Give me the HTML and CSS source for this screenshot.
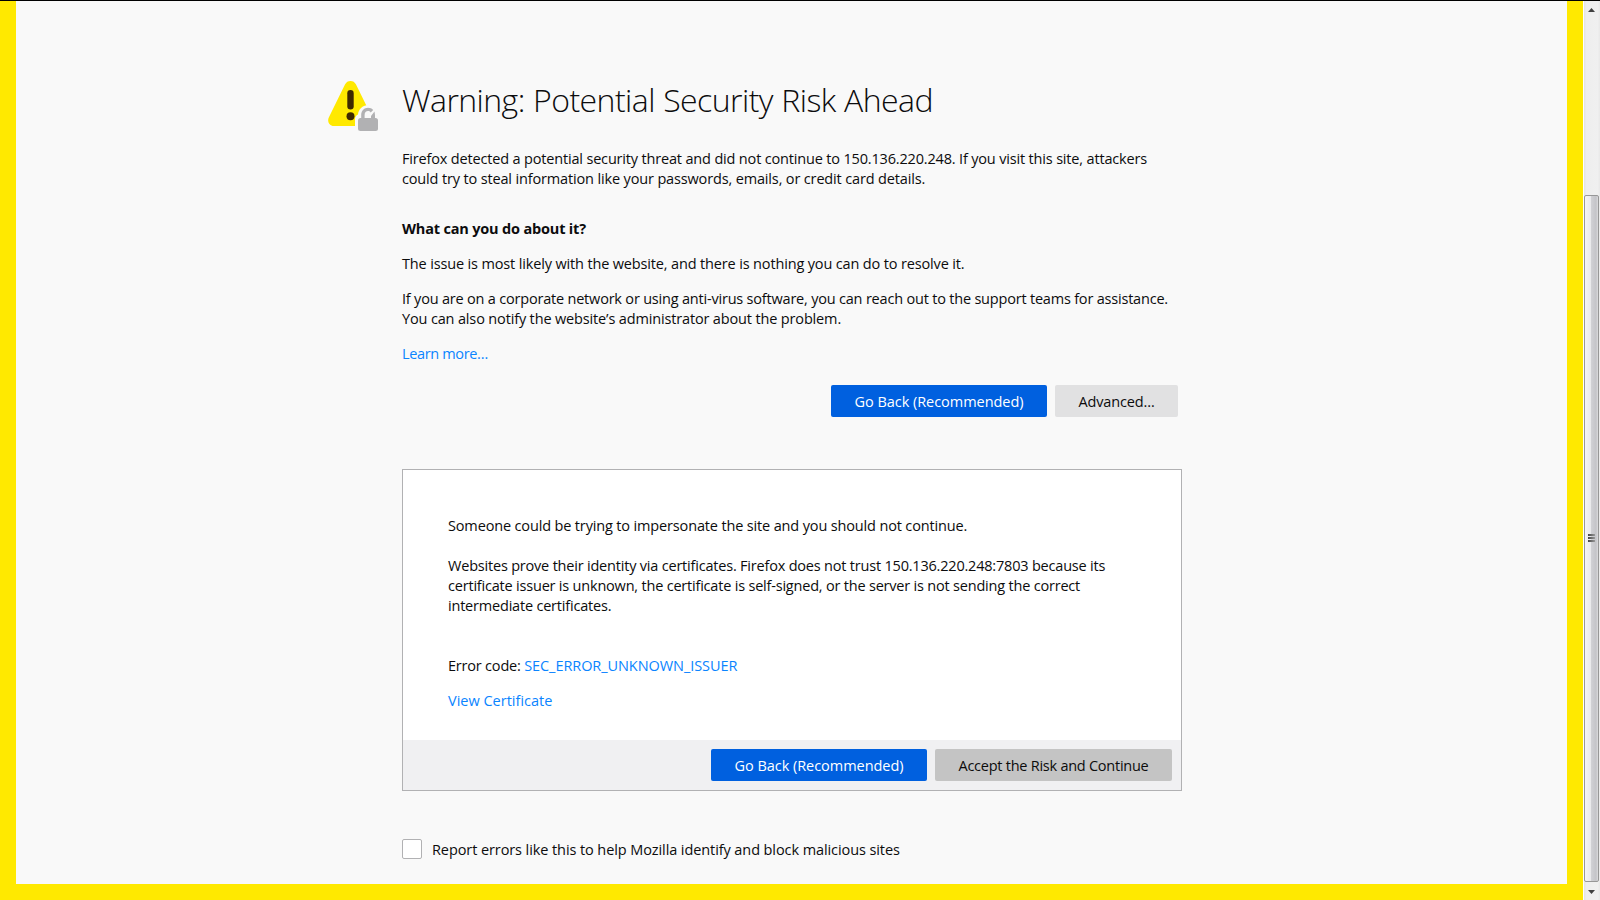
FILE: index.html
```html
<!DOCTYPE html>
<html lang="en">
<head>
<meta charset="utf-8">
<title>Warning: Potential Security Risk Ahead</title>
<link rel="stylesheet" href="styles.css">
</head>
<body>
<div class="window">
  <div class="page">
    <main class="content">
      <header class="title-row">
        <svg class="warning-icon" viewBox="0 0 54 54" width="54" height="54">
          <path d="M23.500 3c2.400 0 4.300 1.200 5.400 3.300L45.200 39.500c1.900 3.800-.6 8.500-5 8.500H6.800c-4.400 0-6.900-4.700-5-8.500L18.100 6.300C19.200 4.200 21.100 3 23.500 3z" fill="#ffe900"/>
          <rect x="20.300" y="12" width="6.400" height="19.500" rx="3.200" fill="#3e2800"/>
          <circle cx="23.500" cy="38.200" r="4" fill="#3e2800"/>
          <path d="M28 55V41q0-3 3-4.500C31.500 31 36 27 41.500 27H54v28z" fill="#f9f9f9"/>
          <rect x="31" y="40" width="20" height="13" rx="2.500" fill="#b1b1b3"/>
          <path d="M34.200 41v-4c0-4.500 3.200-7.300 6.800-7.300 2.200 0 4 .8 5.200 2.300l-2.500 2.400c-.7-.8-1.600-1.300-2.700-1.300-2 0-3.400 1.500-3.400 3.800V41zM44 41v-3l3.500-4.500.5 3.500v4z" fill="#b1b1b3"/>
        </svg>
        <h1 class="title">Warning: Potential Security Risk Ahead</h1>
      </header>
      <p class="intro"><span class="fit-17">Firefox detected a potential security threat and did not continue to 150.136.220.248. If you visit this site, attackers</span><br><span class="fit-15">could try to steal information like your passwords, emails, or credit card details.</span></p>
      <h2 class="subtitle">What can you do about it?</h2>
      <p class="text fit-15">The issue is most likely with the website, and there is nothing you can do to resolve it.</p>
      <p class="text"><span class="fit-20">If you are on a corporate network or using anti-virus software, you can reach out to the support teams for assistance.</span><br><span class="fit-15">You can also notify the website’s administrator about the problem.</span></p>
      <p class="text"><a class="link fit-30">Learn more…</a></p>
      <div class="actions">
        <button class="button primary">Go Back (Recommended)</button>
        <button class="button advanced">Advanced…</button>
      </div>
      <section class="panel">
        <div class="panel-body">
          <p class="summary fit-15">Someone could be trying to impersonate the site and you should not continue.</p>
          <p class="reason fit-20">Websites prove their identity via certificates. Firefox does not trust 150.136.220.248:7803 because its<br>certificate issuer is unknown, the certificate is self-signed, or the server is not sending the correct<br>intermediate certificates.</p>
          <p class="error"><span class="fit-20">Error code: </span><a class="link fit-7">SEC_ERROR_UNKNOWN_ISSUER</a></p>
          <p class="text"><a class="link">View Certificate</a></p>
        </div>
        <div class="panel-footer">
          <button class="button primary">Go Back (Recommended)</button>
          <button class="button accept">Accept the Risk and Continue</button>
        </div>
      </section>
      <label class="report"><span class="checkbox"></span><span class="report-label">Report errors like this to help Mozilla identify and block malicious sites</span></label>
    </main>
  </div>
  <aside class="scrollbar">
    <svg class="arrow" viewBox="0 0 7 4" width="7" height="4"><path d="M0 4L3.500 0 7 4z" fill="#404040"/></svg>
    <div class="thumb"><i class="grip"></i><i class="grip"></i><i class="grip"></i></div>
    <svg class="arrow" viewBox="0 0 7 4" width="7" height="4"><path d="M0 0h7L3.500 4z" fill="#404040"/></svg>
  </aside>
</div>
</body>
</html>
```
FILE: styles.css
```css
* { box-sizing: border-box; }
body { margin: 0; overflow: hidden; background: #f9f9f9; color: #0c0c0d; font: 14.5px/20px "Open Sans", "Noto Sans", sans-serif; }
h1, h2, p { margin: 0; }
.window { display: flex; height: 900px; border-top: 1px solid #000; }
.page { width: 1583px; border: 16px solid #ffe900; border-top: 0; background: #f9f9f9; }
.content { width: 780px; margin-left: 386px; padding-top: 77px; white-space: nowrap; }
.title-row { display: flex; height: 44px; margin-left: -75px; }
.warning-icon { flex: none; width: 54px; height: 54px; margin-right: 21px; }
.title { font-size: 32px; line-height: 44px; font-weight: 300; letter-spacing: -.56px; word-spacing: .6px; }
.intro { margin-top: 27px; }
.subtitle { margin-top: 30px; font-size: 14.5px; line-height: 20px; font-weight: 700; letter-spacing: -.18px; }
.text { margin-top: 15px; }
.link { color: #0a84ff; }
.fit-7 { letter-spacing: -.07px; }
.fit-15 { letter-spacing: -.15px; }
.fit-17 { letter-spacing: -.17px; }
.fit-20 { letter-spacing: -.2px; }
.fit-30 { letter-spacing: -.35px; }
.actions { display: flex; justify-content: flex-end; gap: 8px; margin: 21px 4px 52px 0; }
.button { height: 32px; padding: 2px 0 0; border: 0; border-radius: 2px; font: inherit; color: #0c0c0d; white-space: nowrap; }
.primary { width: 216px; background: #0060df; color: #fff; letter-spacing: -.04px; }
.advanced { width: 123px; background: #e1e1e2; letter-spacing: -.15px; }
.accept { width: 237px; background: #c4c4c4; letter-spacing: -.25px; }
.panel { height: 322px; border: 1px solid #b1b1b3; background: #fff; display: flex; flex-direction: column; }
.panel-body { flex: 1; padding: 46px 45px 0; }
.reason { margin-top: 20px; }
.error { margin-top: 40px; }
.panel-footer { display: flex; justify-content: flex-end; gap: 8px; height: 50px; padding: 9px; background: #f0f0f2; }
.report { display: flex; gap: 10px; margin-top: 48px; }
.report-label { padding-top: 1px; letter-spacing: -.09px; }
.checkbox { width: 20px; height: 20px; border: 1px solid #b1b1b3; border-radius: 2px; background: #fff; }
.scrollbar { width: 17px; display: flex; flex-direction: column; align-items: center; justify-content: space-between; padding: 7px 1px 6px 0; border-left: 1px solid #fff; background: linear-gradient(90deg, #e3e3e3, #eee 15%, #f0f0f0 85%, #e8e8e8); }
.thumb { width: 15px; height: 687px; margin-top: 175px; display: flex; flex-direction: column; align-items: center; justify-content: center; gap: 1px; padding-bottom: 2px; border: 1px solid #979797; border-radius: 2px; background: linear-gradient(90deg, #f5f5f5, #e9e9eb 45%, #d0d0d4 50%, #c4c4c8 85%, #dcdcde); }
.grip { width: 7px; height: 2px; background: linear-gradient(90deg, #444, #999); }
```
